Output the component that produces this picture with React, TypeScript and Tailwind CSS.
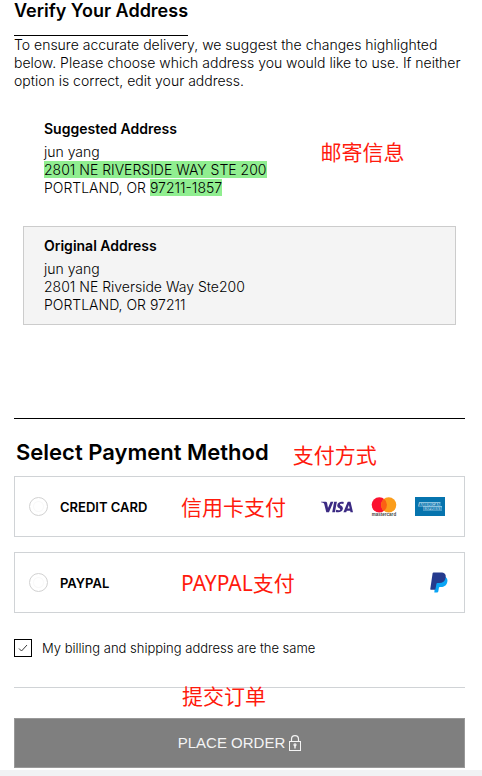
import type { ReactNode } from "react";
import clsx from "clsx";

function Note({ children, className }: { children: ReactNode; className?: string }) {
  return (
    <span
      lang="zh"
      className={clsx(
        "font-['Noto_Sans','Noto_Sans_CJK_SC',sans-serif] text-[21px] leading-6 whitespace-nowrap text-[#ff1a0d]",
        className,
      )}
    >
      {children}
    </span>
  );
}

function VisaLogo() {
  return (
    <svg className="h-3 w-8" viewBox="0 0 32 12" fill="#3b2a83" role="img" aria-label="Visa">
      <path d="M0 .8h4.6c.8 0 1.300.4 1.500 1.200l.9 5L9.600.8h2.800L8 11.200H5.300L3.200 3C3 2.400 2.800 2.200 2.300 2 1.600 1.600.8 1.400 0 1.200z" />
      <path d="M13.200.8h2.700l-2 10.400h-2.700z" />
      <path d="M22.800 1 22.300 3.200c-1-.4-3.300-.7-3.400.4 0 1 3.200 1.300 3 4-.2 3.400-4 4.400-7.200 3.400l.5-2.200c1.300.6 3.800.8 4-.4.1-1.200-3.100-1.300-3-4C16.400 1 20.200 0 22.800 1z" />
      <path
        fillRule="evenodd"
        d="M27 .8h2.500L32 11.200h-2.500l-.3-1.500h-3.400l-.6 1.500h-2.800l4-9.600c.1-.5.3-.8.6-.8zm.9 3.100-1.400 3.700h2.200z"
      />
    </svg>
  );
}

function MastercardLogo() {
  return (
    <svg className="h-5 w-[26px]" viewBox="0 0 26 20" role="img" aria-label="Mastercard">
      <circle cx="8.300" cy="7.800" r="7.600" fill="#fb1230" />
      <circle cx="17.700" cy="7.800" r="7.600" fill="#fb9d1b" />
      <path d="M13 1.800a7.600 7.600 0 0 1 0 12 7.600 7.600 0 0 1 0-12z" fill="#fb6014" />
      <text
        x="13"
        y="19"
        textAnchor="middle"
        fontSize="4.500"
        fontWeight="700"
        fontFamily="Liberation Sans, sans-serif"
        fill="#444"
      >
        mastercard
      </text>
    </svg>
  );
}

function AmexLogo() {
  return (
    <svg className="h-[19px] w-[30px]" viewBox="0 0 30 19" role="img" aria-label="American Express">
      <rect width="30" height="19" fill="#0674ae" />
      <path d="M4 5h21.500v4H27v4.500H8V9.500H3z" fill="#8cc4e0" />
      <g
        fontFamily="Liberation Sans, sans-serif"
        fontWeight="700"
        fontSize="4"
        fill="#0674ae"
      >
        <text x="4" y="8.700">AMERICAN</text>
        <text x="8" y="12.800">EXPRESS</text>
      </g>
    </svg>
  );
}

function PaypalLogo() {
  return (
    <svg className="-mr-[3px] h-[21px] w-[18px]" viewBox="0 0 18 21" role="img" aria-label="PayPal">
      <path
        d="M6 5h9.500c1.800 1.200 2.300 3 1.800 5-.8 3.600-3.200 5-6.300 5h-1.200c-.5 0-.8.3-.9.8L8.300 19.600c-.1.500-.4.800-.9.800H4.300z"
        fill="#0aa5f5"
      />
      <path
        d="M3.600.4h7.200c3.700 0 5.400 1.800 4.900 5-.6 3.700-3 5.600-6.600 5.600H7.400c-.6 0-.9.300-1 .9l-.9 5c-.1.500-.4.800-.9.800H.8c-.4 0-.6-.3-.5-.7L2.600 1.300c.1-.6.4-.9 1-.9z"
        fill="#253b8e"
      />
    </svg>
  );
}

function LockIcon() {
  return (
    <svg className="h-4 w-3" viewBox="0 0 12 16" fill="none" stroke="#f4f4f4" aria-hidden="true">
      <rect x=".5" y="6.500" width="11" height="9" />
      <path d="M2.500 6.500V4.200a3.500 3.500 0 0 1 7 0v2.300" strokeWidth="1.200" />
      <circle cx="6" cy="9.800" r="1" strokeWidth="1.200" />
      <path d="M6 10.500v3" strokeWidth="1.400" />
    </svg>
  );
}

interface AddressProps {
  title: string;
  name: string;
  street: ReactNode;
  city: ReactNode;
  selected?: boolean;
  note?: string;
}

function Address({ title, name, street, city, selected, note }: AddressProps) {
  return (
    <section
      className={clsx(
        "mx-[9px] flex gap-[54px] border px-5 py-2.5",
        selected ? "border-[#cccccc] bg-[#f4f4f4]" : "border-transparent",
      )}
    >
      <div>
        <h2 className="mb-[5px] leading-[18px] font-semibold">{title}</h2>
        <address className="font-light not-italic">
          {name}
          <br />
          {street}
          <br />
          {city}
        </address>
      </div>
      {note && <Note className="mt-5">{note}</Note>}
    </section>
  );
}

interface MethodProps {
  id: string;
  label: string;
  note: string;
  children: ReactNode;
}

function PaymentMethod({ id, label, note, children }: MethodProps) {
  return (
    <div className="flex h-[61px] items-center border border-[#d0d3d6] pr-[19px] pl-3.5">
      <input
        type="radio"
        name="method"
        id={id}
        className="mr-3 size-[19px] shrink-0 appearance-none rounded-full border border-[#d2d2d2] bg-white shadow-[inset_0_0_0_3px_white,inset_0_0_0_4px_#f9f9f9]"
      />
      <label htmlFor={id} className="w-[121px] shrink-0 text-[13px] font-semibold">
        {label}
      </label>
      <Note>{note}</Note>
      <div className="ml-auto flex items-center gap-[18px]">{children}</div>
    </div>
  );
}

export default function App() {
  return (
    <div className="min-h-screen bg-[#f1f2f4] font-[Inter,sans-serif] text-sm leading-[18px] text-black">
      <main className="bg-white pr-[17px] pb-0.5 pl-3.5">
        <h1 className="w-fit border-b border-black pb-[13px] text-lg leading-[22px] font-semibold">
          Verify Your Address
        </h1>
        <p className="mb-[19px] font-light">
          To ensure accurate delivery, we suggest the changes highlighted below. Please choose which
          address you would like to use. If neither option is correct, edit your address.
        </p>

        <div className="flex flex-col gap-[18px]">
          <Address
            title="Suggested Address"
            name="jun yang"
            street={<mark className="bg-[#90ee90] text-black">2801 NE RIVERSIDE WAY STE 200</mark>}
            city={
              <>
                PORTLAND, OR <mark className="bg-[#90ee90] text-black">97211-1857</mark>
              </>
            }
            note="邮寄信息"
          />
          <Address
            title="Original Address"
            name="jun yang"
            street="2801 NE Riverside Way Ste200"
            city="PORTLAND, OR 97211"
            selected
          />
        </div>

        <form className="mt-[93px] border-t border-black pt-[18px]">
          <div className="mb-[9px] flex items-end gap-6 pl-0.5">
            <h2 className="text-[22px] leading-[30px] font-semibold">Select Payment Method</h2>
            <Note>支付方式</Note>
          </div>
          <div className="flex flex-col gap-[15px]">
            <PaymentMethod id="credit-card" label="CREDIT CARD" note="信用卡支付">
              <VisaLogo />
              <MastercardLogo />
              <AmexLogo />
            </PaymentMethod>
            <PaymentMethod id="paypal" label="PAYPAL" note="PAYPAL支付">
              <PaypalLogo />
            </PaymentMethod>
          </div>

          <div className="mt-[26px] mb-[30px] flex items-center gap-2.5">
            <span className="relative flex">
              <input
                type="checkbox"
                id="same-address"
                defaultChecked
                className="size-[18px] appearance-none border border-black bg-white"
              />
              <svg
                className="pointer-events-none absolute inset-0 size-[18px]"
                viewBox="0 0 18 18"
                fill="none"
                stroke="#222"
                aria-hidden="true"
              >
                <path d="M5 9.500 7.500 12 13 6" strokeWidth=".9" />
              </svg>
            </span>
            <label htmlFor="same-address" className="text-[13px] font-light">
              My billing and shipping address are the same
            </label>
          </div>

          <div className="relative border-t border-[#d0d3d6] pt-[30px]">
            <Note className="absolute -top-1 left-[168px]">提交订单</Note>
            <button
              type="submit"
              className="flex h-[50px] w-full items-center justify-center gap-1 border border-[#999999] bg-[#7f7f7f] font-['Liberation_Sans',sans-serif] text-[15px] text-[#f4f4f4]"
            >
              PLACE ORDER
              <LockIcon />
            </button>
          </div>
        </form>
      </main>
    </div>
  );
}
